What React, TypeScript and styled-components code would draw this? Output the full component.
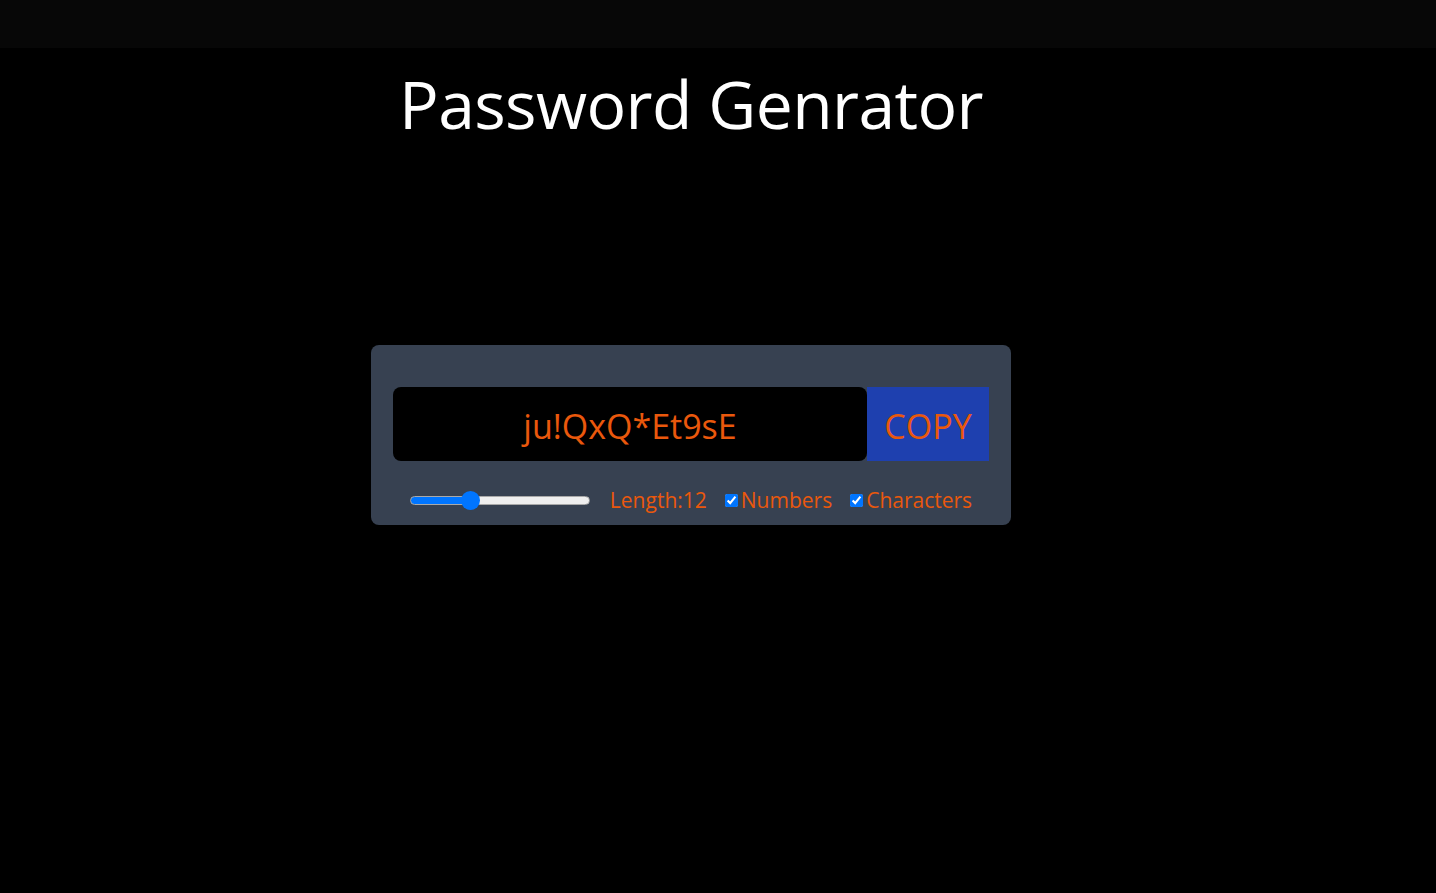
import React, { useCallback, useEffect, useRef, useState } from "react";
import styled, { createGlobalStyle } from "styled-components";

const GlobalStyle = createGlobalStyle`
  html, body {
    margin: 0;
    padding: 0;
    background: #000;
    font-family: "Open Sans", "Noto Sans", sans-serif;
  }
`;

const TopBar = styled.div`
  height: 48px;
  background: #070707;
`;

const Page = styled.main`
  width: 1382px;
  display: flex;
  flex-direction: column;
  align-items: center;
`;

const Title = styled.h1`
  margin: 22px 0 0;
  font-size: 66px;
  line-height: 1;
  font-weight: 400;
  color: #fff;
  letter-spacing: -0.6px;
`;

const Card = styled.div`
  box-sizing: border-box;
  width: 640px;
  margin-top: 209px;
  padding: 42px 22px 10px;
  background: #374151;
  border-radius: 8px;
`;

const InputRow = styled.div`
  display: flex;
  height: 74px;
  margin-bottom: 24px;
`;

const PasswordInput = styled.input`
  flex: 1;
  min-width: 0;
  box-sizing: border-box;
  height: 100%;
  padding: 4px 12px 0;
  border: none;
  border-radius: 8px;
  background: #000;
  color: #ea580c;
  font-family: inherit;
  font-size: 34px;
  text-align: center;
  outline: none;
`;

const CopyButton = styled.button`
  width: 122px;
  height: 100%;
  border: none;
  background: #1e40af;
  color: #ea580c;
  font-family: inherit;
  font-size: 34px;
  padding: 4px 0 0;
  cursor: pointer;
`;

const Controls = styled.div`
  display: flex;
  justify-content: center;
  align-items: center;
  gap: 18px;
  color: #ea580c;
  font-size: 21px;
  line-height: 30px;
`;

const Range = styled.input`
  -webkit-appearance: none;
  appearance: none;
  width: 180px;
  height: 20px;
  margin: 0 2px 0 0;
  background: transparent;
  cursor: pointer;

  &::-webkit-slider-runnable-track {
    height: 9px;
    box-sizing: border-box;
    border-radius: 5px;
    border: 1px solid #a9a9a9;
    background: linear-gradient(
      to right,
      #0075ff 0,
      #0075ff var(--fill),
      #efefef var(--fill),
      #efefef 100%
    );
  }

  &::-webkit-slider-thumb {
    -webkit-appearance: none;
    width: 19px;
    height: 19px;
    margin-top: -6px;
    border-radius: 50%;
    background: #0075ff;
    border: none;
  }
`;

const CheckLabel = styled.label`
  display: inline-flex;
  align-items: center;
  gap: 3px;
  cursor: pointer;
`;

const Check = styled.input`
  margin: 0;
  width: 13px;
  height: 13px;
`;

const MIN = 6;
const MAX = 25;

const App: React.FC = () => {
  const [length, setLength] = useState(12);
  const [numbers, setNumbers] = useState(true);
  const [chars, setChars] = useState(true);
  const [password, setPassword] = useState("ju!QxQ*Et9sE");
  const first = useRef(true);
  const inputRef = useRef<HTMLInputElement>(null);

  const generate = useCallback(() => {
    let str = "ABCDEFGHIJKLMNOPQRSTUVWXYZabcdefghijklmnopqrstuvwxyz";
    if (numbers) str += "0123456789";
    if (chars) str += "!@#$%^&*-_+=[]{}~`";
    let pass = "";
    for (let i = 0; i < length; i++) {
      pass += str.charAt(Math.floor(Math.random() * str.length));
    }
    setPassword(pass);
  }, [length, numbers, chars]);

  useEffect(() => {
    // keep the first password as shown
    if (first.current) {
      first.current = false;
      return;
    }
    generate();
  }, [generate]);

  const copy = () => {
    inputRef.current?.select();
    navigator.clipboard?.writeText(password).catch(() => {});
  };

  // track fill up to the thumb centre
  const pct = (length - MIN) / (MAX - MIN);
  const fill = `calc(${pct} * (100% - 19px) + 9.5px)`;

  return (
    <>
      <GlobalStyle />
      <TopBar />
      <Page>
        <Title>Password Genrator</Title>
        <Card>
          <InputRow>
            <PasswordInput ref={inputRef} value={password} readOnly placeholder="Password" />
            <CopyButton onClick={copy}>COPY</CopyButton>
          </InputRow>
          <Controls>
            <Range
              type="range"
              min={MIN}
              max={MAX}
              value={length}
              style={{ ["--fill" as string]: fill } as React.CSSProperties}
              onChange={(e) => setLength(Number(e.target.value))}
            />
            <span>Length:{length}</span>
            <CheckLabel>
              <Check type="checkbox" checked={numbers} onChange={() => setNumbers((p) => !p)} />
              Numbers
            </CheckLabel>
            <CheckLabel>
              <Check type="checkbox" checked={chars} onChange={() => setChars((p) => !p)} />
              Characters
            </CheckLabel>
          </Controls>
        </Card>
      </Page>
    </>
  );
};

export default App;
